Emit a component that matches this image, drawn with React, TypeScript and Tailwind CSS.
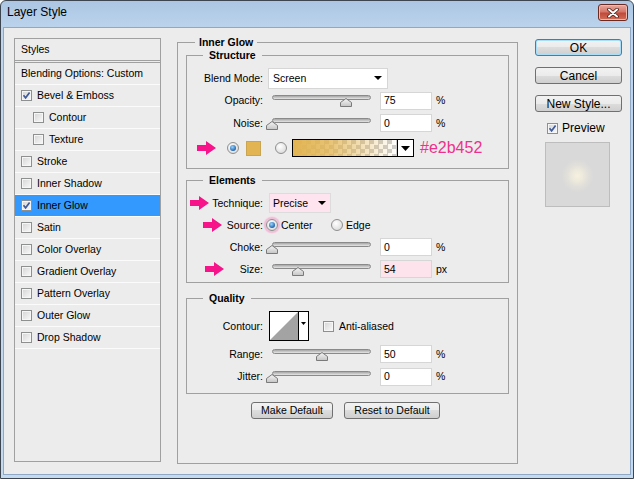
import React from 'react';

// Layer Style dialog (Photoshop, Windows 7 chrome)

const styleItems = [
  { name: 'Bevel & Emboss', checked: true },
  { name: 'Contour', indent: true },
  { name: 'Texture', indent: true },
  { name: 'Stroke' },
  { name: 'Inner Shadow' },
  { name: 'Inner Glow', checked: true, selected: true },
  { name: 'Satin' },
  { name: 'Color Overlay' },
  { name: 'Gradient Overlay' },
  { name: 'Pattern Overlay' },
  { name: 'Outer Glow' },
  { name: 'Drop Shadow' },
];

function Arrow() {
  return (
    <svg width="19" height="14" viewBox="0 0 19 14" className="shrink-0">
      <polygon points="0,4 9,4 9,0 19,7 9,14 9,10 0,10" fill="#f7148b" />
    </svg>
  );
}

function Checkbox({ checked = false }: { checked?: boolean }) {
  return (
    <span className="flex h-[11px] w-[11px] shrink-0 items-center justify-center border border-[#8e8f8f] bg-[linear-gradient(135deg,#d4d4d4,#fafafa)] shadow-[inset_0_0_0_1px_#f6f6f6]">
      {checked && (
        <svg width="9" height="9" viewBox="0 0 9 9">
          <path d="M1.5 4.3 L3.6 6.8 L7.6 1.6" fill="none" stroke="#3f5b9a" strokeWidth="1.7" />
        </svg>
      )}
    </span>
  );
}

function Radio({ checked = false, glow = false }: { checked?: boolean; glow?: boolean }) {
  return (
    <span
      className={`flex h-[12px] w-[12px] shrink-0 items-center justify-center rounded-full border border-[#8f8f8f] bg-[radial-gradient(circle_at_40%_35%,#ffffff,#d2d2d2)] ${
        glow ? 'shadow-[0_0_0_2px_#eec0d8,0_0_0_3px_#f7dbe9]' : ''
      }`}
    >
      {checked && (
        <span className="h-[6px] w-[6px] rounded-full bg-[radial-gradient(circle_at_40%_35%,#9ad6ff,#1b5ea8_75%)]" />
      )}
    </span>
  );
}

function Slider({ pos }: { pos: number }) {
  return (
    <div className="relative h-[12px] w-[99px] shrink-0">
      <div className="mt-[1px] h-[5px] rounded-full border border-[#8a8a8a] bg-[linear-gradient(#a6a6a6,#e6e6e6)]" />
      <svg className="absolute top-[3px]" style={{ left: pos - 6 }} width="12" height="9" viewBox="0 0 12 9">
        <polygon points="6,0.5 11.5,4.5 11.5,8.5 0.5,8.5 0.5,4.5" fill="url(#thumbFill)" stroke="#7a7a7a" />
      </svg>
    </div>
  );
}

function NumInput({ value, pink = false }: { value: string; pink?: boolean }) {
  return (
    <div
      className={`flex h-[18px] w-[52px] shrink-0 items-center border border-[#d6d6d6] pl-[3px] ${
        pink ? 'bg-[#fce3ec]' : 'bg-white'
      }`}
    >
      {value}
    </div>
  );
}

function Label({ children, arrow }: { children: React.ReactNode; arrow?: React.ReactNode }) {
  return (
    <div className="flex w-[76px] shrink-0 items-center">
      {arrow}
      <span className="flex-1 text-right">{children}</span>
    </div>
  );
}

function Caret() {
  return (
    <svg width="8" height="4" viewBox="0 0 8 4" className="shrink-0">
      <polygon points="0,0 8,0 4,4" fill="#000" />
    </svg>
  );
}

function SliderRow({
  label,
  pos,
  value,
  unit = '%',
  pink = false,
  arrow,
  h = 'h-[22px]',
}: {
  label: string;
  pos: number;
  value: string;
  unit?: string;
  pink?: boolean;
  arrow?: React.ReactNode;
  h?: string;
}) {
  return (
    <div className={`flex items-center ${h}`}>
      <Label arrow={arrow}>{label}</Label>
      <div className="ml-[9px]">
        <Slider pos={pos} />
      </div>
      <div className="ml-[9px]">
        <NumInput value={value} pink={pink} />
      </div>
      <span className="ml-[4px]">{unit}</span>
    </div>
  );
}

function WinButton({ children, primary = false, className = '' }: { children: React.ReactNode; primary?: boolean; className?: string }) {
  return (
    <button
      className={`flex h-[17px] items-center justify-center rounded-[3px] border bg-[linear-gradient(#f2f2f2,#ebebeb_50%,#dddddd_50%,#cfcfcf)] leading-none ${
        primary ? 'border-[#3c7fb1] shadow-[inset_0_0_0_1px_#a9def8]' : 'border-[#707070]'
      } ${className}`}
    >
      {children}
    </button>
  );
}

function Group({ title, children, className = '' }: { title: string; children: React.ReactNode; className?: string }) {
  return (
    <fieldset className={`w-[323px] border border-[#a0a0a0] p-0 ${className}`}>
      <legend className="ml-[16px] px-[6px] text-[10.5px] font-bold leading-[13px]">{title}</legend>
      {children}
    </fieldset>
  );
}

export default function App() {
  return (
    <div className="flex h-[479px] w-[634px] flex-col overflow-hidden rounded-t-[6px] border border-[#3d4650] bg-[linear-gradient(#abc6e3,#bed5ed_30px,#c4daef)] font-['Liberation_Sans',Arial,sans-serif] text-black">
      <svg width="0" height="0" className="absolute">
        <defs>
          <linearGradient id="thumbFill" x1="0" y1="0" x2="0" y2="1">
            <stop offset="0" stopColor="#f7f7f7" />
            <stop offset="1" stopColor="#c4c4c4" />
          </linearGradient>
        </defs>
      </svg>

      {/* title bar */}
      <div className="flex h-[26px] shrink-0 items-start justify-between">
        <span className="ml-[6px] mt-[4px] text-[12px] leading-[15px]">Layer Style</span>
        <button className="mr-[5px] mt-[3px] flex h-[17px] w-[30px] items-center justify-center rounded-[3px] border border-[#6b2a22] bg-[linear-gradient(#e9a99b,#d5766a_45%,#c14a3b_55%,#d0705a)] shadow-[inset_0_0_0_1px_#f0b9ad]">
          <svg width="12" height="10" viewBox="0 0 12 10">
            <path d="M2 1.5 L10 8.5 M10 1.5 L2 8.5" stroke="#4b1d18" strokeWidth="3.6" strokeLinecap="round" />
            <path d="M2 1.5 L10 8.5 M10 1.5 L2 8.5" stroke="#ffffff" strokeWidth="2" strokeLinecap="round" />
          </svg>
        </button>
      </div>

      {/* client area */}
      <div className="mx-[2px] mb-[3px] flex flex-1 items-start border border-[#8ea8c6] bg-[#ececec] text-[10.5px] leading-[13px]">
        {/* styles list */}
        <div className="ml-[10px] mt-[10px] flex h-[424px] w-[147px] shrink-0 flex-col border border-[#a0a0a0]">
          <div className="flex h-[21px] items-center pl-[6px]">Styles</div>
          <div className="border-b-[3px] border-double border-[#a0a0a0]" />
          <div className="flex h-[22px] items-center border-b border-[#fbfbfb] pl-[6px]">Blending Options: Custom</div>
          {styleItems.map((s) => (
            <div
              key={s.name}
              className={`flex h-[22px] items-center gap-[5px] border-b border-[#fbfbfb] ${s.indent ? 'pl-[18px]' : 'pl-[6px]'} ${
                s.selected ? 'bg-[#3399ff]' : ''
              }`}
            >
              <Checkbox checked={s.checked} />
              <span>{s.name}</span>
            </div>
          ))}
        </div>

        {/* settings */}
        <fieldset className="ml-[16px] mt-[8px] w-[338px] shrink-0 border border-[#a0a0a0] px-[8px] pb-[44px] pt-0">
          <legend className="ml-[9px] px-[4px] text-[10.5px] font-bold leading-[13px]">Inner Glow</legend>

          <Group title="Structure">
            <div className="pb-[8px] pt-[5px]">
              <div className="flex h-[22px] items-center">
                <Label>Blend Mode:</Label>
                <div className="ml-[5px] flex h-[21px] w-[120px] items-center justify-between border border-[#d6d6d6] bg-white pl-[4px] pr-[5px]">
                  <span>Screen</span>
                  <Caret />
                </div>
              </div>
              <SliderRow label="Opacity:" pos={74} value="75" h="h-[23px]" />
              <SliderRow label="Noise:" pos={0} value="0" />
              <div className="mt-[2px] flex h-[24px] items-center">
                <div className="ml-[10px]">
                  <Arrow />
                </div>
                <div className="ml-[11px]">
                  <Radio checked />
                </div>
                <div className="ml-[7px] h-[15px] w-[15px] shrink-0 border border-[#c9a552] bg-[#e2b452]" />
                <div className="ml-[14px]">
                  <Radio />
                </div>
                <div className="ml-[5px] flex h-[18px] w-[122px] shrink-0 border border-black">
                  <div className="flex-1 bg-[image:repeating-conic-gradient(#cdcdcd_0%_25%,#ffffff_0%_50%)] bg-[length:9px_9px]">
                    <div className="h-full w-full bg-[linear-gradient(to_right,#e2b452,#e2b452cc_35%,#e2b45200)]" />
                  </div>
                  <div className="flex w-[16px] items-center justify-center border-l border-black bg-white">
                    <svg width="9" height="5" viewBox="0 0 9 5">
                      <polygon points="0,0 9,0 4.5,5" fill="#000" />
                    </svg>
                  </div>
                </div>
                <span className="ml-[6px] text-[16px] leading-[18px] text-[#ee318b]">#e2b452</span>
              </div>
            </div>
          </Group>

          <Group title="Elements" className="mt-[5px]">
            <div className="pb-[2px] pt-[5px]">
              <div className="flex h-[22px] items-center">
                <Label
                  arrow={
                    <div className="ml-[3px]">
                      <Arrow />
                    </div>
                  }
                >
                  Technique:
                </Label>
                <div className="ml-[6px] flex h-[20px] w-[62px] items-center justify-between border border-[#dcdcdc] bg-[#fde4ee] pl-[3px] pr-[4px]">
                  <span>Precise</span>
                  <Caret />
                </div>
              </div>
              <div className="flex h-[22px] items-center">
                <Label
                  arrow={
                    <div className="ml-[16px]">
                      <Arrow />
                    </div>
                  }
                >
                  Source:
                </Label>
                <div className="ml-[3px] flex w-[65px] items-center gap-[3px]">
                  <Radio checked glow />
                  <span>Center</span>
                </div>
                <div className="flex items-center gap-[3px]">
                  <Radio />
                  <span>Edge</span>
                </div>
              </div>
              <SliderRow label="Choke:" pos={0} value="0" />
              <SliderRow
                label="Size:"
                pos={26}
                value="54"
                unit="px"
                pink
                arrow={
                  <div className="ml-[18px]">
                    <Arrow />
                  </div>
                }
              />
            </div>
          </Group>

          <Group title="Quality" className="mt-[9px]">
            <div className="pb-[5px] pt-[6px]">
              <div className="flex h-[30px] items-center">
                <Label>Contour:</Label>
                <div className="ml-[6px] flex h-[30px] w-[40px] shrink-0 border border-black bg-white">
                  <svg width="28" height="28" viewBox="0 0 28 28" className="shrink-0">
                    <polygon points="0,28 28,0 28,28" fill="#a3a3a3" />
                  </svg>
                  <div className="flex flex-1 justify-center border-l border-black pt-[10px]">
                    <svg width="5" height="3" viewBox="0 0 5 3">
                      <polygon points="0,0 5,0 2.5,3" fill="#000" />
                    </svg>
                  </div>
                </div>
                <div className="ml-[14px] flex items-center gap-[5px]">
                  <Checkbox />
                  <span>Anti-aliased</span>
                </div>
              </div>
              <div className="mt-[2px]">
                <SliderRow label="Range:" pos={50} value="50" />
              </div>
              <SliderRow label="Jitter:" pos={0} value="0" h="h-[23px]" />
            </div>
          </Group>

          <div className="ml-[65px] mt-[8px] flex gap-[11px]">
            <WinButton className="w-[82px]">Make Default</WinButton>
            <WinButton className="w-[96px]">Reset to Default</WinButton>
          </div>
        </fieldset>

        {/* actions */}
        <div className="ml-[17px] mt-[11px] flex w-[87px] shrink-0 flex-col text-[12px]">
          <div className="flex flex-col gap-[11px]">
            <WinButton primary>OK</WinButton>
            <WinButton>Cancel</WinButton>
            <WinButton>New Style...</WinButton>
          </div>
          <div className="ml-[12px] mt-[10px] flex h-[12px] items-center gap-[4px]">
            <Checkbox checked />
            <span>Preview</span>
          </div>
          <div className="ml-[10px] mt-[8px] h-[65px] w-[65px] border border-[#bdbdbd] bg-[radial-gradient(ellipse_at_50%_52%,#f6f1e0_0px,#eeeadc_5px,#e2e0da_10px,#d9d9d9_16px)]" />
        </div>
      </div>
    </div>
  );
}
